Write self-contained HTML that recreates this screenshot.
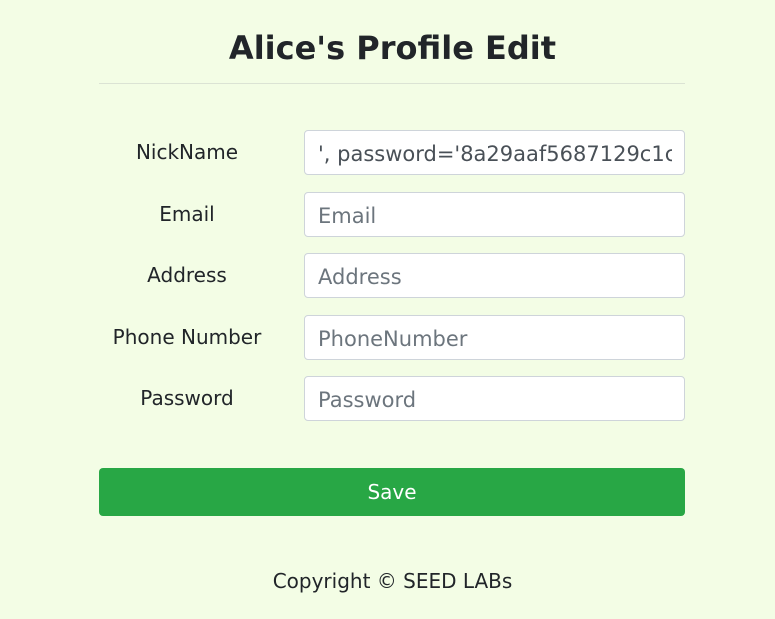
<!DOCTYPE html>
<html><head><meta charset="utf-8"><style>
html,body{margin:0;padding:0;width:775px;height:619px;overflow:hidden;background:#f3fde5;font-family:"DejaVu Sans","Liberation Sans",sans-serif;color:#212529}
.a{position:absolute}
h1{position:absolute;left:0;width:785px;top:27px;margin:0;text-align:center;font-size:32px;font-weight:bold;line-height:42px}
.hr{left:99px;width:586px;top:83px;height:1px;background:#dbe3d4}
.lbl{left:90px;width:194px;text-align:center;font-size:20px;line-height:24px}
.in{left:304px;height:43px;border:1px solid #ced4da;border-radius:4px;background:#fff;font-size:21px;line-height:46px;padding-left:13px;padding-right:12px;box-sizing:content-box;color:#6c757d;white-space:nowrap;width:354px}
.in span{display:block;overflow:hidden}
.btn{left:99px;width:586px;top:468px;height:48px;background:#28a745;border-radius:4px;color:#fff;text-align:center;line-height:48px;font-size:20px}
.ft{left:0;width:785px;top:569px;text-align:center;font-size:20px;line-height:24px}
</style></head><body>
<h1>Alice's Profile Edit</h1>
<div class="a hr"></div>
<div class="a lbl" style="top:140px">NickName</div>
<div class="a in" style="top:130px;color:#495057"><span>', password='8a29aaf5687129c1c</span></div>
<div class="a lbl" style="top:202px">Email</div>
<div class="a in" style="top:192px">Email</div>
<div class="a lbl" style="top:263px">Address</div>
<div class="a in" style="top:253px">Address</div>
<div class="a lbl" style="top:325px">Phone Number</div>
<div class="a in" style="top:315px">PhoneNumber</div>
<div class="a lbl" style="top:386px">Password</div>
<div class="a in" style="top:376px">Password</div>
<div class="a btn">Save</div>
<div class="a ft">Copyright © SEED LABs</div>
</body></html>
